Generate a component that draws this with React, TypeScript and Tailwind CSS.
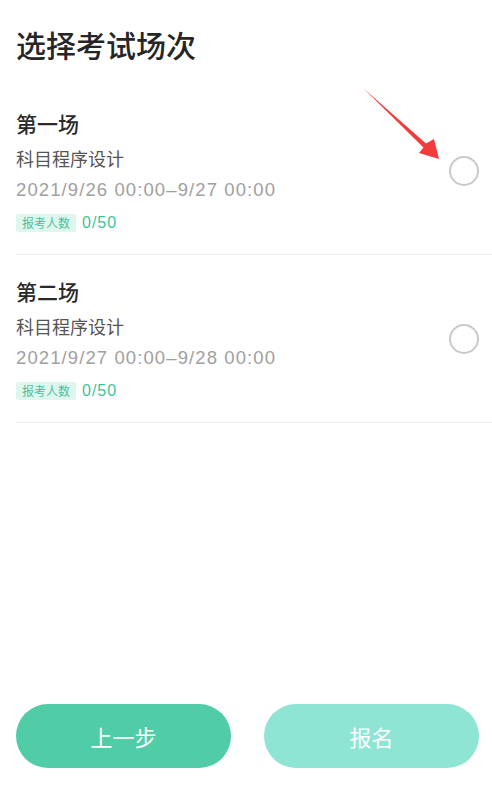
const sessions = [
  { name: "第一场", subject: "科目程序设计", time: "2021/9/26 00:00–9/27 00:00", count: "0/50" },
  { name: "第二场", subject: "科目程序设计", time: "2021/9/27 00:00–9/28 00:00", count: "0/50" },
];

const latin = { fontFamily: '"Liberation Sans", "Noto Sans CJK SC", sans-serif' };

function SessionRow({ s }: { s: (typeof sessions)[number] }) {
  return (
    <div className="flex items-center border-b border-[#ececec]">
      <div className="flex-1 pt-5 pb-[13px]">
        <div className="h-[34px] flex items-center text-[21px] font-medium text-[#2a2a2a]">{s.name}</div>
        <div className="h-[34px] flex items-center text-[18px] text-[#555]">{s.subject}</div>
        <div className="h-[30px] flex items-center text-[18.5px] tracking-[1.1px] text-[#a0a0a0]" style={latin}>
          {s.time}
        </div>
        <div className="h-[36px] flex items-center gap-[6px]">
          <span className="h-[18px] px-[6px] flex items-center rounded-[2px] bg-[#dff6ef] text-[12px] text-[#4dbf9c]">
            报考人数
          </span>
          <span className="text-[16px] tracking-[1px] text-[#3ec39b]" style={latin}>
            {s.count}
          </span>
        </div>
      </div>
      <div className="mr-[13px] w-[30px] h-[30px] rounded-full border-2 border-[#c9c9c9]" />
    </div>
  );
}

export default function App() {
  return (
    <div
      className="relative h-[788px] bg-white flex flex-col"
      style={{ fontFamily: '"Noto Sans CJK SC", "Noto Sans", sans-serif' }}
    >
      <div className="pl-4 pt-6 pb-[23px]">
        <h1 className="h-10 flex items-center text-[30px] font-medium text-[#262626]">选择考试场次</h1>
      </div>

      <div className="pl-4">
        {sessions.map((s) => (
          <SessionRow key={s.name} s={s} />
        ))}
      </div>

      <div className="mt-auto pl-4 pr-[13px] pb-5 flex gap-[33px]">
        <button className="flex-1 h-16 rounded-full bg-[#50cca6] text-white text-[22px]">上一步</button>
        <button className="flex-1 h-16 rounded-full bg-[#8ee5d3] text-white text-[22px]">报名</button>
      </div>

      {/* annotation arrow */}
      <svg className="absolute left-0 top-0 pointer-events-none" width="492" height="200" viewBox="0 0 492 200">
        <polygon points="363,88 426,143.5 434,139 439,159 419,153 423.5,147.5" fill="#f23b3b" />
      </svg>
    </div>
  );
}
